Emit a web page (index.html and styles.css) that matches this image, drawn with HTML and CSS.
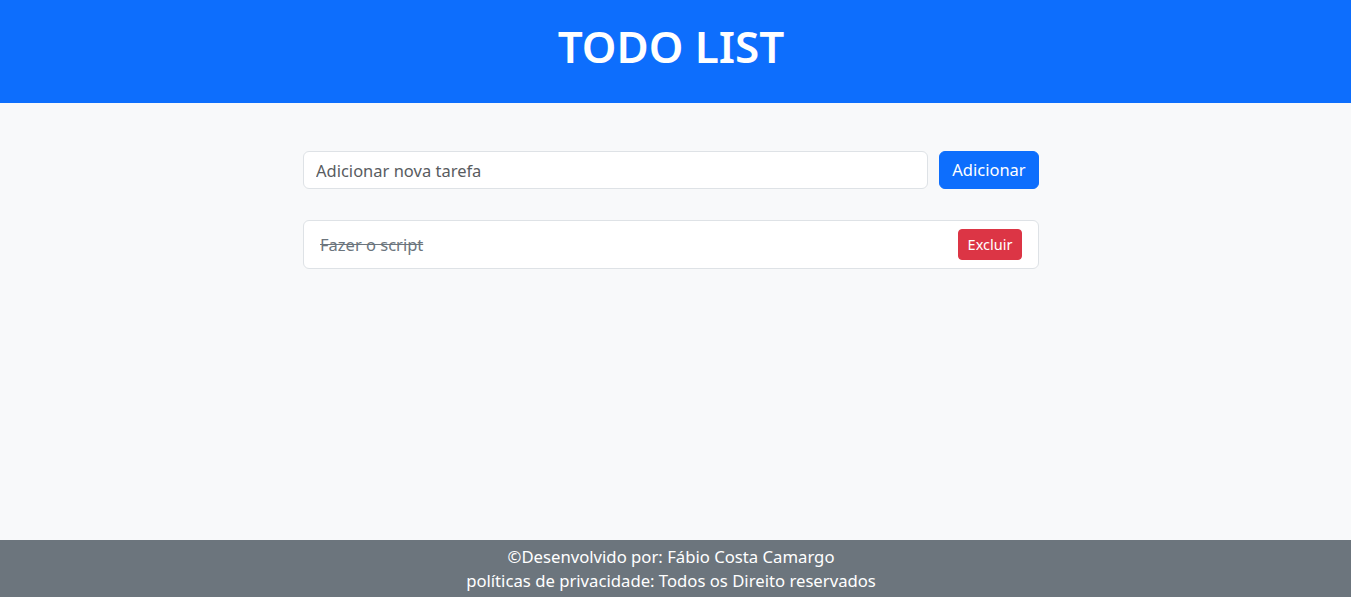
FILE: index.html
```html
<!DOCTYPE html>
<html lang="pt-BR">
<head>
<meta charset="utf-8">
<title>Todo List</title>
<link rel="stylesheet" href="styles.css">
</head>
<body>
<header class="header">
  <h1 class="title">TODO LIST</h1>
</header>
<main class="main">
  <div class="container">
    <form class="add-form">
      <input class="add-input" type="text" placeholder="Adicionar nova tarefa">
      <button class="btn btn-primary" type="button">Adicionar</button>
    </form>
    <ul class="task-list">
      <li class="task">
        <span class="task-text done">Fazer o script</span>
        <button class="btn btn-danger btn-sm" type="button">Excluir</button>
      </li>
    </ul>
  </div>
</main>
<footer class="footer">
  <p class="footer-line">©Desenvolvido por: Fábio Costa Camargo</p>
  <p class="footer-line">políticas de privacidade: Todos os Direito reservados</p>
</footer>
</body>
</html>
```

FILE: styles.css
```css
* { box-sizing: border-box; }
html, body { height: 100%; }
body {
  margin: 0;
  font-family: "Noto Sans", "DejaVu Sans", sans-serif;
  font-size: 16.5px;
  line-height: 24px;
  color: #212529;
  background: #f8f9fa;
  display: flex;
  flex-direction: column;
}
.header {
  background: #0d6efd;
  height: 103px;
  padding: 20px 9px 0 0;
  display: flex;
  justify-content: center;
  align-items: flex-start;
}
.title {
  margin: 0;
  color: #fff;
  font-size: 44px;
  font-weight: 600;
  line-height: 52px;
}
.main { flex: 1; padding-right: 9px; }
.container {
  width: 736px;
  margin: 48px auto 0;
}
.add-form {
  display: flex;
  gap: 11px;
  margin: 0 0 31px;
}
.add-input {
  flex: 1;
  height: 38px;
  padding: 6px 12px;
  font: inherit;
  color: #212529;
  background: #fff;
  border: 1px solid #dee2e6;
  border-radius: 6px;
  outline: none;
}
.add-input::placeholder { color: #595c5f; opacity: 1; }
.btn {
  font: inherit;
  border: 1px solid transparent;
  color: #fff;
  cursor: pointer;
}
.btn-primary {
  width: 100px;
  height: 38px;
  padding: 6px 0;
  background: #0d6efd;
  border-color: #0d6efd;
  border-radius: 6px;
}
.btn-danger {
  background: #dc3545;
  border-color: #dc3545;
}
.btn-sm {
  width: 64px;
  height: 31px;
  padding: 4px 0;
  font-size: 14.5px;
  line-height: 21px;
  border-radius: 4px;
}
.task-list { list-style: none; margin: 0; padding: 0; }
.task {
  display: flex;
  align-items: center;
  justify-content: space-between;
  height: 49px;
  padding: 8px 16px;
  background: #fff;
  border: 1px solid #dee2e6;
  border-radius: 6px;
}
.task-text.done {
  text-decoration: line-through;
  color: #6c757d;
}
.footer {
  background: #6c757d;
  color: #fff;
  text-align: center;
  height: 57px;
  padding: 5px 9px 4px 0;
  font-size: 16.7px;
}
.footer-line { margin: 0; }
```
